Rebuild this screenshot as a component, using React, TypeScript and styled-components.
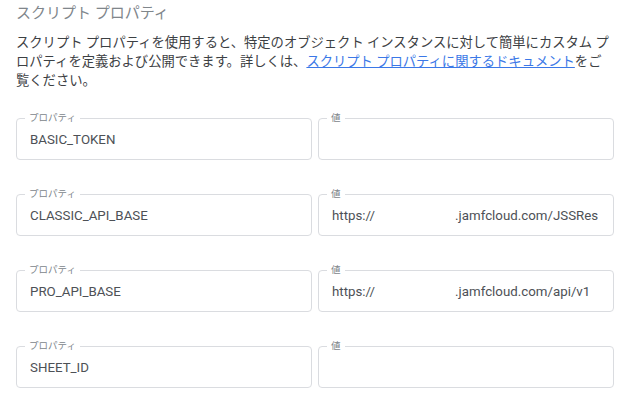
import styled, { createGlobalStyle } from "styled-components";

const GlobalStyle = createGlobalStyle`
  body {
    margin: 0;
    background: #ffffff;
    font-family: Roboto, "Noto Sans CJK JP", sans-serif;
  }
`;

const Page = styled.div`
  padding: 3px 16px 0 16px;
  width: 598px;
`;

const Title = styled.h2`
  margin: 0;
  font-size: 15px;
  line-height: 20px;
  font-weight: 400;
  color: #80868b;
`;

const Description = styled.p`
  margin: 10px 0 0 0;
  font-size: 13.3px;
  line-height: 19px;
  color: #3c4043;
  white-space: nowrap;
`;

const DocLink = styled.a`
  color: #3b78e7;
  text-decoration: underline;
`;

const Grid = styled.div`
  margin-top: 22px;
  display: grid;
  grid-template-columns: 1fr 1fr;
  column-gap: 6px;
  row-gap: 28px;
`;

const Field = styled.fieldset`
  margin: 0;
  min-width: 0;
  padding: 0 13px;
  border: 1px solid #dadce0;
  border-radius: 4px;
`;

const Label = styled.legend`
  margin-left: -5px;
  padding: 0 4px;
  font-size: 9.5px;
  line-height: 12px;
  color: #80868b;
`;

const Value = styled.div`
  height: 31px;
  padding-bottom: 4px;
  display: flex;
  align-items: center;
  font-size: 13.3px;
  color: #4d5156;
  white-space: nowrap;
  overflow: hidden;
`;

const Redacted = styled.span`
  display: inline-block;
  width: 80px;
  flex: none;
`;

type Prop = { key: string; host?: string; path?: string };

// the host part of the URLs is blanked out, as in the source screen
const props: Prop[] = [
  { key: "BASIC_TOKEN" },
  { key: "CLASSIC_API_BASE", host: "https://", path: ".jamfcloud.com/JSSRes" },
  { key: "PRO_API_BASE", host: "https://", path: ".jamfcloud.com/api/v1" },
  { key: "SHEET_ID" },
];

export default function App() {
  return (
    <>
      <GlobalStyle />
      <Page>
        <Title>スクリプト プロパティ</Title>
        <Description>
          スクリプト プロパティを使用すると、特定のオブジェクト インスタンスに対して簡単にカスタム プ
          <br />
          ロパティを定義および公開できます。詳しくは、
          <DocLink href="#">スクリプト プロパティに関するドキュメント</DocLink>
          をご
          <br />
          覧ください。
        </Description>
        <Grid>
          {props.map((p) => (
            <>
              <Field key={p.key + "-k"}>
                <Label>プロパティ</Label>
                <Value>{p.key}</Value>
              </Field>
              <Field key={p.key + "-v"}>
                <Label>値</Label>
                <Value>
                  {p.host && (
                    <>
                      {p.host}
                      <Redacted />
                      {p.path}
                    </>
                  )}
                </Value>
              </Field>
            </>
          ))}
        </Grid>
      </Page>
    </>
  );
}
